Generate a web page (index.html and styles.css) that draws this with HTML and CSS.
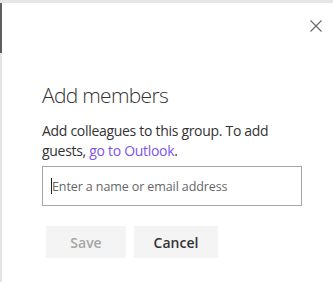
FILE: index.html
```html
<!DOCTYPE html>
<html lang="en">
<head>
    <meta charset="UTF-8">
    <meta name="viewport" content="width=device-width, initial-scale=1.0">
    <title>Add members</title>
    <link rel="stylesheet" href="styles.css">
</head>
<body>
    <div class="topbar"></div>
    <div class="shell">
        <div class="rail"><div class="rail-dark"></div></div>
        <div class="panel">
            <div class="panel-head">
                <button class="close" aria-label="Close">
                    <svg width="12" height="12" viewBox="0 0 12 12">
                        <path d="M0.5 0.5 L11.5 11.5 M11.5 0.5 L0.5 11.5" stroke="#666" stroke-width="1.1" fill="none"/>
                    </svg>
                </button>
            </div>
            <h1 class="title">Add members</h1>
            <p class="intro">Add colleagues to this group. To add guests, <a href="#" class="link">go to Outlook</a>.</p>
            <div class="field">
                <span class="caret"></span>
                <span class="placeholder">Enter a name or email address</span>
            </div>
            <div class="actions">
                <button class="btn btn-save" disabled>Save</button>
                <button class="btn btn-cancel">Cancel</button>
            </div>
        </div>
    </div>
</body>
</html>
```

FILE: styles.css
```css
body {
    font-family: 'Segoe UI', 'Open Sans', 'Noto Sans', sans-serif;
    margin: 0;
    padding: 0;
    background-color: #fff;
    color: #333;
}
.topbar {
    height: 3px;
    background-color: #e6e6e6;
}
.shell {
    display: flex;
    height: 279px;
}
.rail {
    width: 2px;
    background-color: #e4e4e4;
}
.rail-dark {
    height: 50px;
    background-color: #5f5f5f;
}
.panel {
    flex: 1;
    padding: 0 11px 0 40px;
}
.panel-head {
    display: flex;
    justify-content: flex-end;
    padding-top: 17px;
}
.close {
    background: none;
    border: none;
    padding: 0;
    width: 12px;
    height: 12px;
    cursor: pointer;
}
.close svg {
    display: block;
}
.title {
    margin: 49px 0 0;
    font-size: 21px;
    font-weight: 300;
    line-height: 28px;
    letter-spacing: -0.7px;
    color: #333;
}
.intro {
    max-width: 236px;
    margin: 12px 0 0;
    font-size: 14px;
    line-height: 20px;
    letter-spacing: -0.3px;
    color: #333;
}
.link {
    color: #7d55e6;
    text-decoration: none;
}
.field {
    display: flex;
    align-items: center;
    width: 250px;
    height: 38px;
    margin-top: 5px;
    border: 1px solid #a6a6a6;
    padding-left: 8px;
    box-sizing: content-box;
}
.caret {
    width: 1px;
    height: 16px;
    background-color: #222;
}
.placeholder {
    font-size: 12.5px;
    letter-spacing: -0.1px;
    color: #666;
}
.actions {
    display: flex;
    gap: 8px;
    margin: 20px 0 0 4px;
}
.btn {
    height: 32px;
    border: none;
    background-color: #f4f4f4;
    font-family: inherit;
    font-size: 14px;
    font-weight: 600;
    color: #333;
    cursor: pointer;
}
.btn-save {
    width: 80px;
    color: #a6a6a6;
    cursor: default;
}
.btn-cancel {
    width: 84px;
}
```
